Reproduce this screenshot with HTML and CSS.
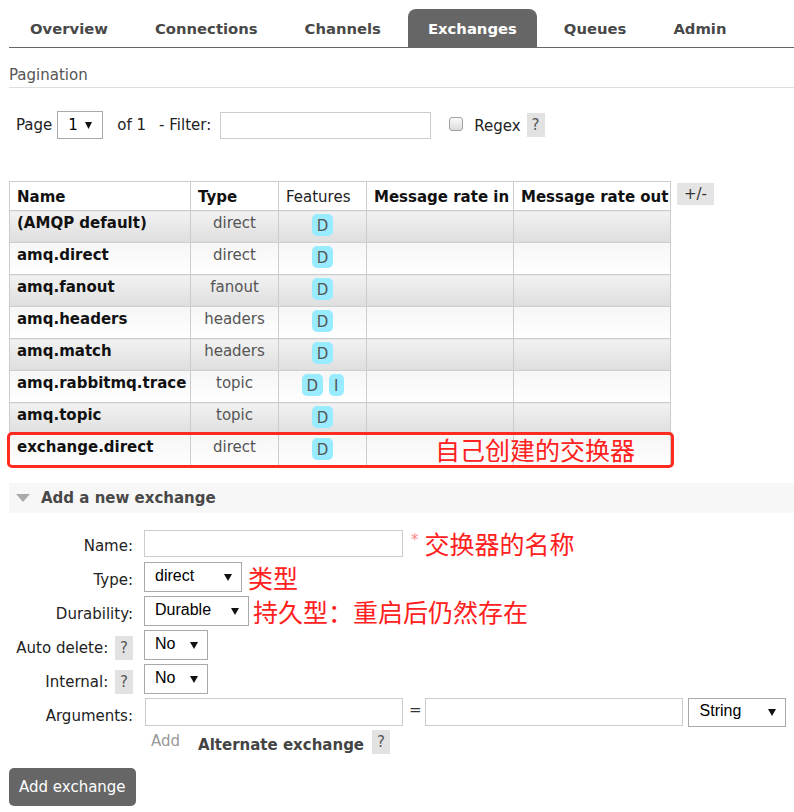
FILE: index.html
```html
<!DOCTYPE html>
<html lang="en">
<head>
<meta charset="utf-8">
<title>RabbitMQ Management - Exchanges</title>
<link rel="stylesheet" href="styles.css">
</head>
<body>
<div class="page">
  <ul class="tabs">
    <li class="tab">Overview</li>
    <li class="tab">Connections</li>
    <li class="tab">Channels</li>
    <li class="tab active">Exchanges</li>
    <li class="tab">Queues</li>
    <li class="tab">Admin</li>
  </ul>

  <h2 class="section-title">Pagination</h2>
  <div class="pager">
    <span class="pg-label">Page</span>
    <span class="sel sel-page"><span class="sel-text">1</span><svg class="arrow" width="7" height="7" viewBox="0 0 7 7"><polygon points="0,0 7,0 3.5,7"/></svg></span>
    <span class="of">of 1</span>
    <span class="filter-label">- Filter:</span>
    <input class="text filter" type="text">
    <input class="check" type="checkbox">
    <span class="regex">Regex</span>
    <span class="help">?</span>
  </div>

  <div class="table-wrap">
    <table class="list">
      <colgroup>
        <col class="c-name"><col class="c-type"><col class="c-feat"><col class="c-in"><col class="c-out">
      </colgroup>
      <thead>
        <tr><th>Name</th><th>Type</th><th class="plain">Features</th><th>Message rate in</th><th>Message rate out</th></tr>
      </thead>
      <tbody>
        <tr class="alt1"><td class="name">(AMQP default)</td><td class="type">direct</td><td class="feat"><div class="feats"><span class="badge">D</span></div></td><td></td><td></td></tr>
        <tr class="alt2"><td class="name">amq.direct</td><td class="type">direct</td><td class="feat"><div class="feats"><span class="badge">D</span></div></td><td></td><td></td></tr>
        <tr class="alt1"><td class="name">amq.fanout</td><td class="type">fanout</td><td class="feat"><div class="feats"><span class="badge">D</span></div></td><td></td><td></td></tr>
        <tr class="alt2"><td class="name">amq.headers</td><td class="type">headers</td><td class="feat"><div class="feats"><span class="badge">D</span></div></td><td></td><td></td></tr>
        <tr class="alt1"><td class="name">amq.match</td><td class="type">headers</td><td class="feat"><div class="feats"><span class="badge">D</span></div></td><td></td><td></td></tr>
        <tr class="alt2"><td class="name">amq.rabbitmq.trace</td><td class="type">topic</td><td class="feat"><div class="feats"><span class="badge">D</span><span class="badge">I</span></div></td><td></td><td></td></tr>
        <tr class="alt1"><td class="name">amq.topic</td><td class="type">topic</td><td class="feat"><div class="feats"><span class="badge">D</span></div></td><td></td><td></td></tr>
        <tr class="alt2"><td class="name">exchange.direct</td><td class="type">direct</td><td class="feat"><div class="feats"><span class="badge">D</span></div></td><td></td><td></td></tr>
      </tbody>
    </table>
    <span class="plusminus">+/-</span>
    <div class="mark-box"><span class="note">自己创建的交换器</span></div>
  </div>

  <div class="section-head">
    <svg class="tri" width="14" height="8" viewBox="0 0 14 8"><polygon points="0,0 14,0 7,8"/></svg>
    <span>Add a new exchange</span>
  </div>

  <div class="form">
    <label class="f-label">Name:</label>
    <div class="f-ctrl">
      <input class="text name-input" type="text">
      <span class="mand">*</span>
      <span class="note name-note">交换器的名称</span>
    </div>

    <label class="f-label">Type:</label>
    <div class="f-ctrl">
      <span class="sel w-type"><span class="sel-text">direct</span><svg class="arrow" width="8" height="7" viewBox="0 0 8 7"><polygon points="0,0 8,0 4,7"/></svg></span>
      <span class="note">类型</span>
    </div>

    <label class="f-label">Durability:</label>
    <div class="f-ctrl">
      <span class="sel w-dur"><span class="sel-text">Durable</span><svg class="arrow" width="8" height="7" viewBox="0 0 8 7"><polygon points="0,0 8,0 4,7"/></svg></span>
      <span class="note dur-note">持久型：重启后仍然存在</span>
    </div>

    <label class="f-label">Auto delete: <span class="help">?</span></label>
    <div class="f-ctrl">
      <span class="sel w-no"><span class="sel-text">No</span><svg class="arrow" width="8" height="7" viewBox="0 0 8 7"><polygon points="0,0 8,0 4,7"/></svg></span>
    </div>

    <label class="f-label">Internal: <span class="help">?</span></label>
    <div class="f-ctrl">
      <span class="sel w-no"><span class="sel-text">No</span><svg class="arrow" width="8" height="7" viewBox="0 0 8 7"><polygon points="0,0 8,0 4,7"/></svg></span>
    </div>

    <label class="f-label">Arguments:</label>
    <div class="f-ctrl args">
      <input class="text arg-input" type="text">
      <span class="eq">=</span>
      <input class="text arg-input" type="text">
      <span class="sel w-str"><span class="sel-text">String</span><svg class="arrow" width="8" height="7" viewBox="0 0 8 7"><polygon points="0,0 8,0 4,7"/></svg></span>
    </div>

    <div class="f-label"></div>
    <div class="f-ctrl add-row">
      <span class="add-link">Add</span>
      <span class="alt">Alternate exchange</span>
      <span class="help">?</span>
    </div>
  </div>

  <button class="btn" type="button">Add exchange</button>
</div>
</body>
</html>
```

FILE: styles.css
```css
* { box-sizing: border-box; }
html, body { margin: 0; padding: 0; background: #fff; }
body {
  font-family: "DejaVu Sans", Verdana, sans-serif;
  font-size: 15px;
  color: #222;
}
.page { padding: 9px 0 0 9px; }

/* Tabs */
.tabs {
  list-style: none;
  margin: 0;
  padding: 0 0 0 1px;
  display: flex;
  gap: 7px;
  height: 39px;
  border-bottom: 1px solid #666;
}
.tab {
  height: 38px;
  line-height: 39px;
  padding: 0 20px;
  font-weight: bold;
  font-size: 14.8px;
  color: #484848;
  border-radius: 8px 8px 0 0;
  white-space: nowrap;
}
.tab.active { background: #666; color: #fff; }

/* Pagination */
.section-title {
  margin: 18px 0 0;
  font-size: 15px;
  font-weight: normal;
  color: #555;
  line-height: 18px;
  padding-bottom: 3px;
  border-bottom: 1px solid #ddd;
}
.pager {
  margin-top: 23px;
  height: 28px;
  display: flex;
  align-items: center;
  padding-left: 7px;
}
.sel {
  display: inline-flex;
  align-items: center;
  justify-content: space-between;
  height: 30px;
  padding: 0 9px 0 10px;
  border: 1px solid #a9a9a9;
  background: #fff;
  font-family: "Liberation Sans", Arial, sans-serif;
  font-size: 16px;
  color: #000;
}
.sel .sel-text { margin-top: -3px; }
.arrow { fill: #111; display: block; }
.sel-page {
  width: 46px;
  height: 28px;
  margin-left: 5px;
  padding: 0 10px 0 10px;
  font-family: "DejaVu Sans", Verdana, sans-serif;
  font-size: 15px;
}
.sel-page .sel-text { margin-top: 0; }
.of { margin-left: 14px; }
.filter-label { margin-left: 13px; }
.text {
  border: 1px solid #ccc;
  background: #fff;
  margin: 0;
  padding: 0 4px;
  font: inherit;
}
.filter { margin-left: 9px; width: 211px; height: 27px; }
.check {
  appearance: none;
  -webkit-appearance: none;
  margin: 0 0 0 18px;
  width: 14px;
  height: 14px;
  border: 1px solid #a0a0a0;
  border-radius: 3px;
  background: linear-gradient(#fafafa, #dcdcdc);
  position: relative;
  top: -1px;
}
.regex { margin-left: 11px; position: relative; top: 1px; }
.help {
  display: inline-block;
  width: 18px;
  height: 24px;
  line-height: 24px;
  text-align: center;
  background: #e2e2e2;
  color: #555;
  margin-left: 6px;
  font-weight: normal;
}

/* Table */
.table-wrap {
  margin-top: 42px;
  position: relative;
  display: flex;
  align-items: flex-start;
}
.list {
  border-collapse: collapse;
  table-layout: fixed;
  width: 661px;
}
.c-name { width: 181px; }
.c-type { width: 88px; }
.c-feat { width: 88px; }
.c-in { width: 147px; }
.c-out { width: 157px; }
.list th, .list td { border: 1px solid #ccc; white-space: nowrap; }
.list th {
  height: 29px;
  padding: 1px 4px 0 7px;
  text-align: left;
  font-weight: bold;
  color: #111;
  background: #fff;
  vertical-align: middle;
}
.list th.plain { font-weight: normal; color: #222; }
.list td {
  height: 32px;
  padding: 3px 7px 0;
  vertical-align: top;
  line-height: 18px;
}
.list tr.alt1 td { background: linear-gradient(#f2f2f2, #dedede); }
.list tr.alt2 td { background: linear-gradient(#f6f6f6, #ffffff); }
.list td.name { font-weight: bold; color: #111; }
.list td.type { text-align: center; color: #555; }
.list td.feat { padding: 3px 0 0; }
.feats { display: flex; justify-content: center; gap: 6px; }
.badge {
  display: inline-block;
  background: #99ebff;
  color: #555;
  padding: 3px 5px 1px;
  line-height: 18px;
  border-radius: 5px;
}
.plusminus {
  margin: 2px 0 0 6px;
  background: #e4e4e4;
  color: #333;
  height: 22px;
  line-height: 22px;
  padding: 0 7px;
}
.mark-box {
  position: absolute;
  left: -2px;
  top: 251px;
  width: 667px;
  height: 36px;
  border: 3px solid #ff2a20;
  border-radius: 5px;
  padding: 2px 0 0 425px;
}
.note {
  font-family: "Noto Sans CJK SC", "Noto Sans CJK JP", sans-serif;
  font-size: 25px;
  line-height: 25px;
  color: #ff2020;
  white-space: nowrap;
}

/* Add a new exchange */
.section-head {
  margin-top: 16px;
  height: 30px;
  background: #f7f7f7;
  display: flex;
  align-items: center;
  padding-left: 7px;
  font-weight: bold;
  color: #484848;
}
.tri { fill: #aaa; margin-right: 11px; }

.form {
  margin-top: 15px;
  display: grid;
  grid-template-columns: 124px auto;
  grid-template-rows: repeat(6, 30px) 24px;
  column-gap: 11px;
  row-gap: 4px;
}
.f-label {
  display: flex;
  justify-content: flex-end;
  align-items: center;
  padding-top: 6px;
  color: #222;
  white-space: pre;
}
.f-label .help { margin-left: 2px; }
.f-ctrl { display: flex; align-items: center; }
.name-input { width: 259px; height: 27px; }
.mand { color: #f88; margin: 3px 0 0 8px; align-self: flex-start; }
.f-ctrl .note { margin-left: 6px; }
.f-ctrl .name-note { margin-left: 6px; }
.f-ctrl .dur-note { margin-left: 4px; }
.w-type { width: 98px; }
.w-dur { width: 105px; }
.w-no { width: 64px; }
.w-str { width: 98px; margin-left: 5px; height: 29px; padding-left: 11px; }
.args { align-items: flex-start; }
.arg-input { width: 258px; height: 28px; }
.args .arg-input:first-child { margin-left: 1px; }
.eq { margin: 3px 3px 0 6px; color: #333; }
.add-row { align-items: flex-start; }
.add-link { color: #999; margin: 0 0 0 7px; line-height: 18px; }
.alt { font-weight: bold; color: #444; margin-left: 18px; margin-top: 4px; line-height: 18px; }
.add-row .help { margin-left: 8px; margin-top: -2px; }

.btn {
  display: block;
  margin-top: 12px;
  height: 38px;
  padding: 0 10px;
  border: none;
  border-radius: 5px;
  background: #666;
  color: #fff;
  font-family: "DejaVu Sans", Verdana, sans-serif;
  font-size: 15px;
}
```
